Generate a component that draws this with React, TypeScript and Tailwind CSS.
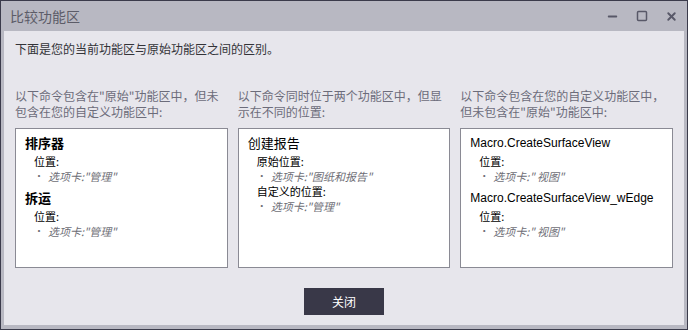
import { Minus, Square, X } from "lucide-react";

type Group = { label: string; tab: string };
type Entry = { title: string; bold?: boolean; latin?: boolean; groups: Group[] };

const columns: { heading: string[]; entries: Entry[] }[] = [
  {
    heading: ["以下命令包含在\"原始\"功能区中，但未", "包含在您的自定义功能区中:"],
    entries: [
      { title: "排序器", bold: true, groups: [{ label: "位置:", tab: "选项卡:\"管理\"" }] },
      { title: "拆运", bold: true, groups: [{ label: "位置:", tab: "选项卡:\"管理\"" }] },
    ],
  },
  {
    heading: ["以下命令同时位于两个功能区中，但显", "示在不同的位置:"],
    entries: [
      {
        title: "创建报告",
        groups: [
          { label: "原始位置:", tab: "选项卡:\"图纸和报告\"" },
          { label: "自定义的位置:", tab: "选项卡:\"管理\"" },
        ],
      },
    ],
  },
  {
    heading: ["以下命令包含在您的自定义功能区中，", "但未包含在\"原始\"功能区中:"],
    entries: [
      { title: "Macro.CreateSurfaceView", latin: true, groups: [{ label: "位置:", tab: "选项卡:\" 视图\"" }] },
      { title: "Macro.CreateSurfaceView_wEdge", latin: true, groups: [{ label: "位置:", tab: "选项卡:\" 视图\"" }] },
    ],
  },
];

const cjk = "font-['Noto_Sans_CJK_SC',sans-serif]";

function EntryBlock({ entry, first }: { entry: Entry; first: boolean }) {
  return (
    <div className={first ? "" : "mt-[5px]"}>
      <div
        className={`leading-5 text-black ${
          entry.latin ? "font-['Liberation_Sans','Noto_Sans_CJK_SC',sans-serif] text-[12px]" : "text-[13px]"
        } ${entry.bold ? "font-bold" : ""}`}
      >
        {entry.title}
      </div>
      <div className="pl-[9px]">
        {entry.groups.map((g, i) => (
          <div key={i} className={i === 0 ? "mt-[1px]" : "mt-px"}>
            <div className="text-[11px] leading-[15px] text-black">{g.label}</div>
            <div className="flex items-center gap-[4px] text-[11px] leading-[14px] text-[#6e6e76]">
              <span className="text-[10px]">•</span>
              <span className="italic">{g.tab}</span>
            </div>
          </div>
        ))}
      </div>
    </div>
  );
}

export default function App() {
  return (
    <div className={`w-[688px] h-[330px] bg-[#3b3b4b] p-px ${cjk}`}>
      <div className="flex h-full flex-col bg-[#b8b8c2] px-[3px] pb-[4px]">
        <div className="flex h-[30px] items-center justify-between pl-[6px] pr-[6px]">
          <span className="text-[14px] text-[#5c5c68]">比较功能区</span>
          <div className="flex items-center gap-[17px] text-[#585868]">
            <Minus size={13} strokeWidth={3.5} />
            <Square size={12} strokeWidth={3} />
            <X size={13} strokeWidth={3.5} />
          </div>
        </div>
        <div className="flex flex-1 flex-col bg-[#e7e6ec] px-[11px]">
          <p className="mt-[10px] text-[12px] leading-[16px] text-[#333338]">
            下面是您的当前功能区与原始功能区之间的区别。
          </p>
          <div className="mt-[31px] grid grid-cols-3 gap-[10px]">
            {columns.map((col, ci) => (
              <div key={ci} className="flex flex-col">
                <div className="whitespace-nowrap text-[12px] leading-[16px] text-[#6c6c7a]">
                  {col.heading[0]}
                  <br />
                  {col.heading[1]}
                </div>
                <div className="mt-[8px] h-[140px] border border-[#8a8a94] bg-white pl-[9px] pt-[4px]">
                  {col.entries.map((e, ei) => (
                    <EntryBlock key={ei} entry={e} first={ei === 0} />
                  ))}
                </div>
              </div>
            ))}
          </div>
          <div className="mt-[20px] flex justify-center">
            <button className="h-[27px] w-[80px] bg-[#393848] text-[12px] text-white">关闭</button>
          </div>
        </div>
      </div>
    </div>
  );
}
